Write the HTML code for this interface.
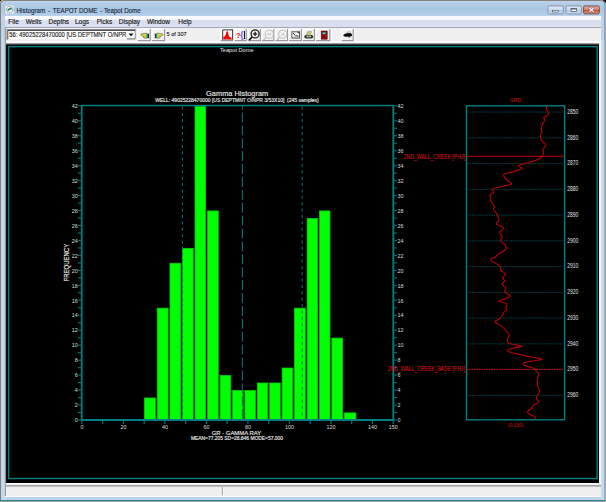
<!DOCTYPE html>
<html><head><meta charset="utf-8">
<style>
html,body{margin:0;padding:0;}
body{width:606px;height:502px;overflow:hidden;position:relative;background:#E2CAC2;font-family:"Liberation Sans", sans-serif;}
.abs{position:absolute;}
svg text{font-family:"Liberation Sans", sans-serif;}
.chart text{stroke-width:0.15px;}
.s5{font-size:5px;fill:#E8E8E8;}
</style></head><body>
<!-- window frame -->
<svg class="abs" style="left:0;top:0" width="606" height="502" viewBox="0 0 606 502">
<defs>
<linearGradient id="tb" x1="0" y1="0" x2="0" y2="1"><stop offset="0" stop-color="#BAD1EA"/><stop offset="0.5" stop-color="#A9C6E3"/><stop offset="1" stop-color="#B3CDE8"/></linearGradient>
<linearGradient id="bb" x1="0" y1="0" x2="0" y2="1"><stop offset="0" stop-color="#DDE8F4"/><stop offset="0.45" stop-color="#CBDBEE"/><stop offset="0.5" stop-color="#B3C9E3"/><stop offset="1" stop-color="#C9DCF0"/></linearGradient>
<linearGradient id="cb" x1="0" y1="0" x2="0" y2="1"><stop offset="0" stop-color="#EBAFA0"/><stop offset="0.45" stop-color="#DD8470"/><stop offset="0.52" stop-color="#C9472F"/><stop offset="1" stop-color="#E3A08E"/></linearGradient>
</defs>
<rect x="0" y="0" width="606" height="502" fill="#E2CAC2"/>
<path d="M0 501.3 V5 Q0 0 5 0 H600 Q605.3 0 605.3 5 V501.3 Z" fill="#858078"/>
<rect x="604.4" y="2" width="0.9" height="499.3" fill="#4A98A2"/>
<rect x="0" y="500" width="605.3" height="1.3" fill="#2C8088"/>
<path d="M1 500 V5 Q1 1 5 1 H600 Q604.4 1 604.4 5 V500 Z" fill="#BDD3EB"/>
<rect x="1.5" y="1.5" width="602.5" height="14.1" rx="3" fill="url(#tb)"/>
<rect x="1.8" y="40" width="3.2" height="460" fill="#C4DAF1"/>
<rect x="601" y="40" width="3.2" height="460" fill="#C4DAF1"/>
<rect x="0" y="0" width="1.2" height="1.2" fill="#111"/>
<path d="M603 0 H606 V2.5 H605 Q604.5 0.8 603 0.8 Z" fill="#111"/>
<!-- min -->
<rect x="547.9" y="5.9" width="15.4" height="8" rx="1.5" fill="url(#bb)" stroke="#7D8FA6" stroke-width="0.9"/>
<rect x="552.6" y="10.3" width="5.8" height="1.7" fill="#FFFFFF" stroke="#3F4F63" stroke-width="0.6"/>
<!-- max -->
<rect x="566" y="5.9" width="15.4" height="8" rx="1.5" fill="url(#bb)" stroke="#7D8FA6" stroke-width="0.9"/>
<rect x="571" y="8.6" width="5.4" height="2.8" fill="#FFFFFF" stroke="#3F4F63" stroke-width="0.7"/>
<rect x="571" y="8.6" width="5.4" height="0.9" fill="#3F4F63"/>
<!-- close -->
<rect x="583.6" y="5.9" width="15.7" height="8" rx="1.5" fill="url(#cb)" stroke="#6E4440" stroke-width="0.9"/>
<path d="M589.6 8 L593.4 11.6 M593.4 8 L589.6 11.6" stroke="#6A5A60" stroke-width="2.2" stroke-linecap="round"/>
<path d="M589.6 8 L593.4 11.6 M593.4 8 L589.6 11.6" stroke="#F4F8FC" stroke-width="1.2" stroke-linecap="round"/>
<!-- app icon -->
<rect x="5.3" y="5.5" width="8.6" height="8.4" rx="1.5" fill="#E9EEF0"/>
<circle cx="9.6" cy="9.7" r="3.3" fill="none" stroke="#6F8A80" stroke-width="1" stroke-dasharray="1.3 0.8"/>
<path d="M7.6 10.3 L9.3 9.2 L11.6 8.2" stroke="#157A5C" stroke-width="1.6" fill="none"/>
</svg>
<svg class="abs" style="left:0;top:0" width="200" height="16" viewBox="0 0 200 16"><g style="font-size:6.8px" fill="#1C2A3E" stroke="#1C2A3E" stroke-width="0.15">
<text x="16.6" y="12.5" textLength="28.6" lengthAdjust="spacingAndGlyphs">Histogram</text>
<text x="48" y="12.5">-</text>
<text x="52.7" y="12.5" textLength="44.7" lengthAdjust="spacingAndGlyphs">TEAPOT DOME</text>
<text x="100.1" y="12.5">-</text>
<text x="104" y="12.5" textLength="36.6" lengthAdjust="spacingAndGlyphs">Teapot Dome</text>
</g></svg>

<!-- menu bar -->
<div class="abs" style="left:5px;top:15.6px;width:596px;height:11.4px;background:linear-gradient(#FBFCFE 0%,#F6F8FC 30%,#DADFF0 40%,#DBE0F1 100%);"></div>
<div class="abs" style="left:5px;top:26.9px;width:596px;height:1.1px;background:#A4A8B0;"></div>
<div class="abs" style="left:0;top:17.8px;font-size:6.5px;line-height:8px;color:#1B1B1B;white-space:pre;-webkit-text-stroke:0.15px #1B1B1B;"><span class="abs" style="left:8.3px">File</span><span class="abs" style="left:25.7px">Wells</span><span class="abs" style="left:48.5px">Depths</span><span class="abs" style="left:75px">Logs</span><span class="abs" style="left:96.7px">Picks</span><span class="abs" style="left:118.8px">Display</span><span class="abs" style="left:146.9px">Window</span><span class="abs" style="left:178.2px">Help</span></div>

<!-- toolbar -->
<div class="abs" style="left:5px;top:28px;width:596px;height:13.3px;background:#F0F0F0;"></div>
<div class="abs" style="left:5px;top:41px;width:596px;height:1.8px;background:#FDFDFD;"></div>
<div class="abs" style="left:5px;top:42.8px;width:596px;height:2.3px;background:linear-gradient(#C8C8C8,#101010);"></div>

<!-- dropdown -->
<svg class="abs" style="left:0;top:26px" width="140" height="18" viewBox="0 26 140 18"><rect x="6.5" y="29" width="129.5" height="11" fill="#F0F0F0"/><path d="M7 40 V29.6 H136" stroke="#8A8A8A" stroke-width="1.1" fill="none"/><path d="M8 39.2 V30.6 H135.2" stroke="#404040" stroke-width="1" fill="none"/><rect x="8.5" y="31.1" width="126.3" height="7.6" fill="#FFFFFF"/><rect x="127" y="31.1" width="7.8" height="7.4" fill="#F6F6F6"/><path d="M126.9 38.9 H135.4 V30.6" stroke="#6A6A6A" stroke-width="1" fill="none"/><path d="M135.9 40 V29.6" stroke="#DADADA" stroke-width="0.8" fill="none"/></svg>
<svg class="abs" style="left:0;top:26px" width="200" height="18" viewBox="0 26 200 18"><text x="9.3" y="37.4" style="font-size:6.9px" fill="#141414" stroke="#141414" stroke-width="0.12" textLength="117" lengthAdjust="spacingAndGlyphs">56: 49025228470000 [US DEPTMNT O/NPR</text><text x="166.5" y="36.1" style="font-size:6.2px" fill="#141414" stroke="#141414" stroke-width="0.12" textLength="20.1" lengthAdjust="spacingAndGlyphs">5 of 307</text></svg>

<svg class="abs" style="left:127px;top:30px" width="9" height="9" viewBox="0 0 9 9"><path d="M1.9 3.8 L6.1 3.8 L4 6.1 Z" fill="#000" stroke="#000" stroke-width="0.3"/></svg>
<!-- nav buttons + toolbar icons -->
<svg class="abs" style="left:0;top:0" width="606" height="50" viewBox="0 0 606 50"><rect x="137.3" y="28.5" width="13.5" height="12.700000000000003" fill="#F2F2F2"/><path d="M137.8 41.2 V29.0 H150.8" stroke="#FFFFFF" stroke-width="1" fill="none"/><path d="M137.8 40.6 H150.20000000000002 V29.0" stroke="#9A9A9A" stroke-width="1.2" fill="none"/><rect x="151.6" y="28.5" width="13.5" height="12.700000000000003" fill="#F2F2F2"/><path d="M152.1 41.2 V29.0 H165.1" stroke="#FFFFFF" stroke-width="1" fill="none"/><path d="M152.1 40.6 H164.5 V29.0" stroke="#9A9A9A" stroke-width="1.2" fill="none"/><g transform="translate(140.7 0) scale(1 1)"><path d="M0.2 34.6 Q0.2 33.7 1.2 33.7 L3.4 33.7 L4.2 33.1 L5.6 33.3 L6.2 33.6 L6.2 38 L4.4 38.2 Q3.2 38.2 2.8 37.4 L2.6 36.2 L1.2 35.6 Q0.2 35.5 0.2 34.6 Z" fill="#E4E24A" stroke="#4A4A18" stroke-width="0.6" stroke-linejoin="round"/><path d="M3 35.8 L5 35.8 M3.2 36.9 L5 36.9" stroke="#8A8A30" stroke-width="0.4"/><rect x="6.1" y="33.6" width="1.2" height="4.6" fill="#0A9AA8"/><rect x="7.2" y="33.6" width="1" height="4.6" fill="#111"/></g><g transform="translate(163.0 0) scale(-1 1)"><path d="M0.2 34.6 Q0.2 33.7 1.2 33.7 L3.4 33.7 L4.2 33.1 L5.6 33.3 L6.2 33.6 L6.2 38 L4.4 38.2 Q3.2 38.2 2.8 37.4 L2.6 36.2 L1.2 35.6 Q0.2 35.5 0.2 34.6 Z" fill="#E4E24A" stroke="#4A4A18" stroke-width="0.6" stroke-linejoin="round"/><path d="M3 35.8 L5 35.8 M3.2 36.9 L5 36.9" stroke="#8A8A30" stroke-width="0.4"/><rect x="6.1" y="33.6" width="1.2" height="4.6" fill="#0A9AA8"/><rect x="7.2" y="33.6" width="1" height="4.6" fill="#111"/></g><rect x="220.2" y="28.5" width="12.800000000000011" height="12.700000000000003" fill="#F2F2F2"/><path d="M220.7 41.2 V29.0 H233.0" stroke="#FFFFFF" stroke-width="1" fill="none"/><path d="M220.7 40.6 H232.4 V29.0" stroke="#9A9A9A" stroke-width="1.2" fill="none"/><rect x="222.7" y="29.9" width="9.9" height="9.9" fill="#FAFAFA"/><path d="M222.7 39.8 V29.9 H232.6 V39.8" stroke="#3A3A3A" stroke-width="1" fill="none"/><path d="M222.7 39.6 H232.6" stroke="#8A8A8A" stroke-width="0.8" fill="none"/><path d="M223.3 39.2 L223.4 36.6 L224.6 36.4 L225.4 35.6 L226 33.6 L226.8 31.3 L227.8 31.3 L228.4 33.8 L228.8 36 L230 37 L231.2 37.8 L232 39.2 Z" fill="#FF0000"/><rect x="234.0" y="28.5" width="12.800000000000011" height="12.700000000000003" fill="#F2F2F2"/><path d="M234.5 41.2 V29.0 H246.8" stroke="#FFFFFF" stroke-width="1" fill="none"/><path d="M234.5 40.6 H246.20000000000002 V29.0" stroke="#9A9A9A" stroke-width="1.2" fill="none"/><text x="235.9" y="37.9" style="font:bold 7.6px 'Liberation Sans',sans-serif" fill="#FF0000">?</text><text x="240.3" y="38.3" style="font:bold 8.2px 'Liberation Sans',sans-serif" fill="#5A5AFF">{</text><rect x="243.9" y="31" width="1.1" height="6.8" fill="#1A1A1A"/><rect x="243.8" y="38" width="1.3" height="1" fill="#000"/><rect x="247.8" y="28.5" width="13.199999999999989" height="12.700000000000003" fill="#F2F2F2"/><path d="M248.3 41.2 V29.0 H261.0" stroke="#FFFFFF" stroke-width="1" fill="none"/><path d="M248.3 40.6 H260.4 V29.0" stroke="#9A9A9A" stroke-width="1.2" fill="none"/><circle cx="255.1" cy="33.9" r="4" fill="none" stroke="#1A1A1A" stroke-width="1.3"/><path d="M252.3 36.8 L249 40.1" stroke="#1A1A1A" stroke-width="1.7"/><path d="M253 33.9 H257.2 M255.1 31.8 V36" stroke="#1A1A1A" stroke-width="1.3"/><rect x="261.5" y="28.5" width="12.899999999999977" height="12.700000000000003" fill="#F2F2F2"/><path d="M262.0 41.2 V29.0 H274.4" stroke="#FFFFFF" stroke-width="1" fill="none"/><path d="M262.0 40.6 H273.79999999999995 V29.0" stroke="#9A9A9A" stroke-width="1.2" fill="none"/><circle cx="269.3" cy="34.2" r="4.1" fill="none" stroke="#BDBDBD" stroke-width="1"/><path d="M266.4 37.1 L263.5 40" stroke="#BDBDBD" stroke-width="1.2"/><path d="M267.4 34.2 H271.2" stroke="#BDBDBD" stroke-width="1.2"/><rect x="274.9" y="28.5" width="13.300000000000011" height="12.700000000000003" fill="#F2F2F2"/><path d="M275.4 41.2 V29.0 H288.2" stroke="#FFFFFF" stroke-width="1" fill="none"/><path d="M275.4 40.6 H287.59999999999997 V29.0" stroke="#9A9A9A" stroke-width="1.2" fill="none"/><circle cx="282.8" cy="34.2" r="4.1" fill="none" stroke="#BDBDBD" stroke-width="1"/><path d="M279.9 37.1 L277 40" stroke="#BDBDBD" stroke-width="1.2"/><path d="M281.3 32.7 L284.3 35.7 M284.3 32.7 L281.3 35.7" stroke="#BDBDBD" stroke-width="0.9"/><rect x="288.6" y="28.5" width="13.399999999999977" height="12.700000000000003" fill="#F2F2F2"/><path d="M289.1 41.2 V29.0 H302.0" stroke="#FFFFFF" stroke-width="1" fill="none"/><path d="M289.1 40.6 H301.4 V29.0" stroke="#9A9A9A" stroke-width="1.2" fill="none"/><rect x="291.9" y="31.8" width="7.6" height="6.3" fill="#FCFCFC" stroke="#555" stroke-width="1"/><path d="M293 33.6 Q294.2 33.4 294.6 35 Q295.4 36.6 297 35.6 L298.6 36.2" stroke="#222" stroke-width="0.9" fill="none"/><path d="M293.2 37.2 Q295.5 36.4 298.6 37.3" stroke="#777" stroke-width="0.6" fill="none"/><circle cx="298.3" cy="32.6" r="0.8" fill="#333"/><rect x="302.3" y="28.5" width="12.699999999999989" height="12.700000000000003" fill="#F2F2F2"/><path d="M302.8 41.2 V29.0 H315.0" stroke="#FFFFFF" stroke-width="1" fill="none"/><path d="M302.8 40.6 H314.4 V29.0" stroke="#9A9A9A" stroke-width="1.2" fill="none"/><path d="M306.2 34.8 L307.6 31.6 L311.6 31.4 L310.6 34.8 Z" fill="#D8D8A0" stroke="#8A8A50" stroke-width="0.5"/><path d="M307.2 33 L310.6 32.6 M307 34 L310.2 33.6" stroke="#9A9A40" stroke-width="0.4"/><rect x="304.3" y="34.9" width="8.9" height="3.5" rx="1.6" fill="#2E2E2E"/><rect x="306.6" y="35.6" width="4.4" height="1.6" fill="#D8D8D8"/><rect x="308.2" y="35.6" width="1.3" height="0.9" fill="#E03020"/><rect x="308.2" y="36.4" width="1.3" height="0.9" fill="#20A020"/><rect x="315.7" y="28.5" width="14.699999999999989" height="12.700000000000003" fill="#F2F2F2"/><path d="M316.2 41.2 V29.0 H330.4" stroke="#FFFFFF" stroke-width="1" fill="none"/><path d="M316.2 40.6 H329.79999999999995 V29.0" stroke="#9A9A9A" stroke-width="1.2" fill="none"/><rect x="321.2" y="31.0" width="6" height="8.2" fill="#8A0A0A" stroke="#4A0000" stroke-width="0.5"/><rect x="322.6" y="32.4" width="3" height="1.8" fill="#30E0F0"/><rect x="326" y="35.4" width="0.7" height="0.7" fill="#E08020"/><path d="M331.4 28.5 V41.2" stroke="#FFFFFF" stroke-width="0.8"/><rect x="341.2" y="28.5" width="12.600000000000023" height="12.700000000000003" fill="#F2F2F2"/><path d="M341.7 41.2 V29.0 H353.8" stroke="#FFFFFF" stroke-width="1" fill="none"/><path d="M341.7 40.6 H353.2 V29.0" stroke="#9A9A9A" stroke-width="1.2" fill="none"/><path d="M346.6 32.4 Q349.4 31.3 351.2 32.4" stroke="#9A9A9A" stroke-width="0.8" fill="none"/><path d="M343.1 35.5 Q344 33.8 346.8 33.3 Q350.4 32.4 352 34.3 Q352.5 35.9 351 36.6 L349.8 36.5 L349.3 37.7 L348.3 37.3 L348.6 36.4 Q346.6 36.5 345.4 36.7 Q344 36.5 343.1 35.5 Z" fill="#0E0E0E"/><path d="M354.6 28.5 V41.2" stroke="#FFFFFF" stroke-width="0.8"/></svg>


<!-- client area -->
<svg class="abs" style="left:0;top:0" width="606" height="502" viewBox="0 0 606 502">
<defs><linearGradient id="lg" x1="0" y1="0" x2="1" y2="0"><stop offset="0" stop-color="#A6A6A6"/><stop offset="1" stop-color="#3A3A3A"/></linearGradient></defs>
<rect x="5" y="483" width="596" height="1.8" fill="#FAFAFA"/>
<rect x="5" y="484.9" width="596" height="1.9" fill="#A9A9A9"/>
<rect x="5" y="486.8" width="596" height="9.1" fill="#EFEFEF"/>
<rect x="5" y="495.8" width="596" height="1.2" fill="#FBFBFB"/>
<rect x="221.9" y="487" width="1.2" height="8.3" fill="#A8A8A8"/><rect x="223.1" y="487" width="0.8" height="8.3" fill="#FFFFFF"/>
<rect x="4.8" y="27" width="1.2" height="469" fill="#9E9E9E"/>
<rect x="5.9" y="45" width="593.2" height="438" fill="#000"/>
<rect x="5.3" y="45" width="1" height="438" fill="url(#lg)"/>
<rect x="599.1" y="42" width="1.9" height="441" fill="#F8F8F8"/>
<rect x="8.6" y="46.6" width="588.6" height="431.9" fill="none" stroke="#008080" stroke-width="1.4"/>
</svg>
<svg class="abs" style="left:200px;top:40px" width="80" height="16" viewBox="200 40 80 16"><text x="220" y="52.4" style="font-size:6.2px" fill="#E8E8E8" textLength="33.6" lengthAdjust="spacingAndGlyphs">Teapot Dome</text></svg>

<svg class="abs chart" style="left:0;top:0;color:#E8E8E8" width="606" height="502" viewBox="0 0 606 502">
<rect x="144.50" y="397.96" width="10.85" height="22.04" fill="#00FF00" stroke="#00D200" stroke-width="0.8"/>
<rect x="157.25" y="308.19" width="10.80" height="111.81" fill="#00FF00" stroke="#00D200" stroke-width="0.8"/>
<rect x="169.95" y="263.30" width="10.70" height="156.70" fill="#00FF00" stroke="#00D200" stroke-width="0.8"/>
<rect x="182.55" y="248.34" width="10.60" height="171.66" fill="#00FF00" stroke="#00D200" stroke-width="0.8"/>
<rect x="195.05" y="106.20" width="10.60" height="313.80" fill="#00FF00" stroke="#00D200" stroke-width="0.8"/>
<rect x="207.55" y="210.93" width="10.70" height="209.07" fill="#00FF00" stroke="#00D200" stroke-width="0.8"/>
<rect x="220.15" y="375.51" width="10.60" height="44.49" fill="#00FF00" stroke="#00D200" stroke-width="0.8"/>
<rect x="232.65" y="390.48" width="10.40" height="29.52" fill="#00FF00" stroke="#00D200" stroke-width="0.8"/>
<rect x="244.95" y="390.48" width="10.50" height="29.52" fill="#00FF00" stroke="#00D200" stroke-width="0.8"/>
<rect x="257.35" y="383.00" width="10.40" height="37.00" fill="#00FF00" stroke="#00D200" stroke-width="0.8"/>
<rect x="269.65" y="383.00" width="10.60" height="37.00" fill="#00FF00" stroke="#00D200" stroke-width="0.8"/>
<rect x="282.15" y="368.03" width="10.50" height="51.97" fill="#00FF00" stroke="#00D200" stroke-width="0.8"/>
<rect x="294.55" y="308.19" width="10.70" height="111.81" fill="#00FF00" stroke="#00D200" stroke-width="0.8"/>
<rect x="307.15" y="218.41" width="10.50" height="201.59" fill="#00FF00" stroke="#00D200" stroke-width="0.8"/>
<rect x="319.55" y="210.93" width="10.40" height="209.07" fill="#00FF00" stroke="#00D200" stroke-width="0.8"/>
<rect x="331.85" y="338.11" width="10.70" height="81.89" fill="#00FF00" stroke="#00D200" stroke-width="0.8"/>
<rect x="344.45" y="412.92" width="11.45" height="7.08" fill="#00FF00" stroke="#00D200" stroke-width="0.8"/>
<line x1="182.40" y1="105.80" x2="182.40" y2="420.00" stroke="#007878" stroke-width="1.05" stroke-dasharray="3 3.37" stroke-dashoffset="-0.83"/>
<line x1="242.40" y1="105.80" x2="242.40" y2="420.00" stroke="#007878" stroke-width="1.05" stroke-dasharray="10 2.9" stroke-dashoffset="6.3"/>
<line x1="302.20" y1="105.80" x2="302.20" y2="420.00" stroke="#007878" stroke-width="1.05" stroke-dasharray="3 3.37" stroke-dashoffset="-0.83"/>
<line x1="81.70" y1="105.45" x2="393.30" y2="105.45" stroke="#008080" stroke-width="1.5"/>
<line x1="81.70" y1="105.10" x2="81.70" y2="420.90" stroke="#008080" stroke-width="1.8"/>
<line x1="393.30" y1="105.10" x2="393.30" y2="420.90" stroke="#008080" stroke-width="1.8"/>
<line x1="80.80" y1="420.00" x2="394.20" y2="420.00" stroke="#008080" stroke-width="1.9"/>
<line x1="77.9" y1="420.00" x2="81.70" y2="420.00" stroke="#007474" stroke-width="1.1"/>
<line x1="393.30" y1="420.00" x2="397" y2="420.00" stroke="#007474" stroke-width="1.1"/>
<text transform="translate(77.80 422.20) scale(0.9 1)" text-anchor="end" style="font-size:6.0px" fill="#DDDDDD" >0</text>
<text transform="translate(397.60 422.20) scale(0.9 1)" text-anchor="start" style="font-size:6.0px" fill="#DDDDDD" >0</text>
<line x1="77.9" y1="412.52" x2="81.70" y2="412.52" stroke="#007474" stroke-width="1.1"/>
<line x1="393.30" y1="412.52" x2="397" y2="412.52" stroke="#007474" stroke-width="1.1"/>
<line x1="77.9" y1="405.04" x2="81.70" y2="405.04" stroke="#007474" stroke-width="1.1"/>
<line x1="393.30" y1="405.04" x2="397" y2="405.04" stroke="#007474" stroke-width="1.1"/>
<text transform="translate(77.80 407.24) scale(0.9 1)" text-anchor="end" style="font-size:6.0px" fill="#DDDDDD" >2</text>
<text transform="translate(397.60 407.24) scale(0.9 1)" text-anchor="start" style="font-size:6.0px" fill="#DDDDDD" >2</text>
<line x1="77.9" y1="397.56" x2="81.70" y2="397.56" stroke="#007474" stroke-width="1.1"/>
<line x1="393.30" y1="397.56" x2="397" y2="397.56" stroke="#007474" stroke-width="1.1"/>
<line x1="77.9" y1="390.08" x2="81.70" y2="390.08" stroke="#007474" stroke-width="1.1"/>
<line x1="393.30" y1="390.08" x2="397" y2="390.08" stroke="#007474" stroke-width="1.1"/>
<text transform="translate(77.80 392.28) scale(0.9 1)" text-anchor="end" style="font-size:6.0px" fill="#DDDDDD" >4</text>
<text transform="translate(397.60 392.28) scale(0.9 1)" text-anchor="start" style="font-size:6.0px" fill="#DDDDDD" >4</text>
<line x1="77.9" y1="382.60" x2="81.70" y2="382.60" stroke="#007474" stroke-width="1.1"/>
<line x1="393.30" y1="382.60" x2="397" y2="382.60" stroke="#007474" stroke-width="1.1"/>
<line x1="77.9" y1="375.11" x2="81.70" y2="375.11" stroke="#007474" stroke-width="1.1"/>
<line x1="393.30" y1="375.11" x2="397" y2="375.11" stroke="#007474" stroke-width="1.1"/>
<text transform="translate(77.80 377.31) scale(0.9 1)" text-anchor="end" style="font-size:6.0px" fill="#DDDDDD" >6</text>
<text transform="translate(397.60 377.31) scale(0.9 1)" text-anchor="start" style="font-size:6.0px" fill="#DDDDDD" >6</text>
<line x1="77.9" y1="367.63" x2="81.70" y2="367.63" stroke="#007474" stroke-width="1.1"/>
<line x1="393.30" y1="367.63" x2="397" y2="367.63" stroke="#007474" stroke-width="1.1"/>
<line x1="77.9" y1="360.15" x2="81.70" y2="360.15" stroke="#007474" stroke-width="1.1"/>
<line x1="393.30" y1="360.15" x2="397" y2="360.15" stroke="#007474" stroke-width="1.1"/>
<text transform="translate(77.80 362.35) scale(0.9 1)" text-anchor="end" style="font-size:6.0px" fill="#DDDDDD" >8</text>
<text transform="translate(397.60 362.35) scale(0.9 1)" text-anchor="start" style="font-size:6.0px" fill="#DDDDDD" >8</text>
<line x1="77.9" y1="352.67" x2="81.70" y2="352.67" stroke="#007474" stroke-width="1.1"/>
<line x1="393.30" y1="352.67" x2="397" y2="352.67" stroke="#007474" stroke-width="1.1"/>
<line x1="77.9" y1="345.19" x2="81.70" y2="345.19" stroke="#007474" stroke-width="1.1"/>
<line x1="393.30" y1="345.19" x2="397" y2="345.19" stroke="#007474" stroke-width="1.1"/>
<text transform="translate(77.80 347.39) scale(0.9 1)" text-anchor="end" style="font-size:6.0px" fill="#DDDDDD" >10</text>
<text transform="translate(397.60 347.39) scale(0.9 1)" text-anchor="start" style="font-size:6.0px" fill="#DDDDDD" >10</text>
<line x1="77.9" y1="337.71" x2="81.70" y2="337.71" stroke="#007474" stroke-width="1.1"/>
<line x1="393.30" y1="337.71" x2="397" y2="337.71" stroke="#007474" stroke-width="1.1"/>
<line x1="77.9" y1="330.23" x2="81.70" y2="330.23" stroke="#007474" stroke-width="1.1"/>
<line x1="393.30" y1="330.23" x2="397" y2="330.23" stroke="#007474" stroke-width="1.1"/>
<text transform="translate(77.80 332.43) scale(0.9 1)" text-anchor="end" style="font-size:6.0px" fill="#DDDDDD" >12</text>
<text transform="translate(397.60 332.43) scale(0.9 1)" text-anchor="start" style="font-size:6.0px" fill="#DDDDDD" >12</text>
<line x1="77.9" y1="322.75" x2="81.70" y2="322.75" stroke="#007474" stroke-width="1.1"/>
<line x1="393.30" y1="322.75" x2="397" y2="322.75" stroke="#007474" stroke-width="1.1"/>
<line x1="77.9" y1="315.27" x2="81.70" y2="315.27" stroke="#007474" stroke-width="1.1"/>
<line x1="393.30" y1="315.27" x2="397" y2="315.27" stroke="#007474" stroke-width="1.1"/>
<text transform="translate(77.80 317.47) scale(0.9 1)" text-anchor="end" style="font-size:6.0px" fill="#DDDDDD" >14</text>
<text transform="translate(397.60 317.47) scale(0.9 1)" text-anchor="start" style="font-size:6.0px" fill="#DDDDDD" >14</text>
<line x1="77.9" y1="307.79" x2="81.70" y2="307.79" stroke="#007474" stroke-width="1.1"/>
<line x1="393.30" y1="307.79" x2="397" y2="307.79" stroke="#007474" stroke-width="1.1"/>
<line x1="77.9" y1="300.30" x2="81.70" y2="300.30" stroke="#007474" stroke-width="1.1"/>
<line x1="393.30" y1="300.30" x2="397" y2="300.30" stroke="#007474" stroke-width="1.1"/>
<text transform="translate(77.80 302.50) scale(0.9 1)" text-anchor="end" style="font-size:6.0px" fill="#DDDDDD" >16</text>
<text transform="translate(397.60 302.50) scale(0.9 1)" text-anchor="start" style="font-size:6.0px" fill="#DDDDDD" >16</text>
<line x1="77.9" y1="292.82" x2="81.70" y2="292.82" stroke="#007474" stroke-width="1.1"/>
<line x1="393.30" y1="292.82" x2="397" y2="292.82" stroke="#007474" stroke-width="1.1"/>
<line x1="77.9" y1="285.34" x2="81.70" y2="285.34" stroke="#007474" stroke-width="1.1"/>
<line x1="393.30" y1="285.34" x2="397" y2="285.34" stroke="#007474" stroke-width="1.1"/>
<text transform="translate(77.80 287.54) scale(0.9 1)" text-anchor="end" style="font-size:6.0px" fill="#DDDDDD" >18</text>
<text transform="translate(397.60 287.54) scale(0.9 1)" text-anchor="start" style="font-size:6.0px" fill="#DDDDDD" >18</text>
<line x1="77.9" y1="277.86" x2="81.70" y2="277.86" stroke="#007474" stroke-width="1.1"/>
<line x1="393.30" y1="277.86" x2="397" y2="277.86" stroke="#007474" stroke-width="1.1"/>
<line x1="77.9" y1="270.38" x2="81.70" y2="270.38" stroke="#007474" stroke-width="1.1"/>
<line x1="393.30" y1="270.38" x2="397" y2="270.38" stroke="#007474" stroke-width="1.1"/>
<text transform="translate(77.80 272.58) scale(0.9 1)" text-anchor="end" style="font-size:6.0px" fill="#DDDDDD" >20</text>
<text transform="translate(397.60 272.58) scale(0.9 1)" text-anchor="start" style="font-size:6.0px" fill="#DDDDDD" >20</text>
<line x1="77.9" y1="262.90" x2="81.70" y2="262.90" stroke="#007474" stroke-width="1.1"/>
<line x1="393.30" y1="262.90" x2="397" y2="262.90" stroke="#007474" stroke-width="1.1"/>
<line x1="77.9" y1="255.42" x2="81.70" y2="255.42" stroke="#007474" stroke-width="1.1"/>
<line x1="393.30" y1="255.42" x2="397" y2="255.42" stroke="#007474" stroke-width="1.1"/>
<text transform="translate(77.80 257.62) scale(0.9 1)" text-anchor="end" style="font-size:6.0px" fill="#DDDDDD" >22</text>
<text transform="translate(397.60 257.62) scale(0.9 1)" text-anchor="start" style="font-size:6.0px" fill="#DDDDDD" >22</text>
<line x1="77.9" y1="247.94" x2="81.70" y2="247.94" stroke="#007474" stroke-width="1.1"/>
<line x1="393.30" y1="247.94" x2="397" y2="247.94" stroke="#007474" stroke-width="1.1"/>
<line x1="77.9" y1="240.46" x2="81.70" y2="240.46" stroke="#007474" stroke-width="1.1"/>
<line x1="393.30" y1="240.46" x2="397" y2="240.46" stroke="#007474" stroke-width="1.1"/>
<text transform="translate(77.80 242.66) scale(0.9 1)" text-anchor="end" style="font-size:6.0px" fill="#DDDDDD" >24</text>
<text transform="translate(397.60 242.66) scale(0.9 1)" text-anchor="start" style="font-size:6.0px" fill="#DDDDDD" >24</text>
<line x1="77.9" y1="232.98" x2="81.70" y2="232.98" stroke="#007474" stroke-width="1.1"/>
<line x1="393.30" y1="232.98" x2="397" y2="232.98" stroke="#007474" stroke-width="1.1"/>
<line x1="77.9" y1="225.50" x2="81.70" y2="225.50" stroke="#007474" stroke-width="1.1"/>
<line x1="393.30" y1="225.50" x2="397" y2="225.50" stroke="#007474" stroke-width="1.1"/>
<text transform="translate(77.80 227.70) scale(0.9 1)" text-anchor="end" style="font-size:6.0px" fill="#DDDDDD" >26</text>
<text transform="translate(397.60 227.70) scale(0.9 1)" text-anchor="start" style="font-size:6.0px" fill="#DDDDDD" >26</text>
<line x1="77.9" y1="218.01" x2="81.70" y2="218.01" stroke="#007474" stroke-width="1.1"/>
<line x1="393.30" y1="218.01" x2="397" y2="218.01" stroke="#007474" stroke-width="1.1"/>
<line x1="77.9" y1="210.53" x2="81.70" y2="210.53" stroke="#007474" stroke-width="1.1"/>
<line x1="393.30" y1="210.53" x2="397" y2="210.53" stroke="#007474" stroke-width="1.1"/>
<text transform="translate(77.80 212.73) scale(0.9 1)" text-anchor="end" style="font-size:6.0px" fill="#DDDDDD" >28</text>
<text transform="translate(397.60 212.73) scale(0.9 1)" text-anchor="start" style="font-size:6.0px" fill="#DDDDDD" >28</text>
<line x1="77.9" y1="203.05" x2="81.70" y2="203.05" stroke="#007474" stroke-width="1.1"/>
<line x1="393.30" y1="203.05" x2="397" y2="203.05" stroke="#007474" stroke-width="1.1"/>
<line x1="77.9" y1="195.57" x2="81.70" y2="195.57" stroke="#007474" stroke-width="1.1"/>
<line x1="393.30" y1="195.57" x2="397" y2="195.57" stroke="#007474" stroke-width="1.1"/>
<text transform="translate(77.80 197.77) scale(0.9 1)" text-anchor="end" style="font-size:6.0px" fill="#DDDDDD" >30</text>
<text transform="translate(397.60 197.77) scale(0.9 1)" text-anchor="start" style="font-size:6.0px" fill="#DDDDDD" >30</text>
<line x1="77.9" y1="188.09" x2="81.70" y2="188.09" stroke="#007474" stroke-width="1.1"/>
<line x1="393.30" y1="188.09" x2="397" y2="188.09" stroke="#007474" stroke-width="1.1"/>
<line x1="77.9" y1="180.61" x2="81.70" y2="180.61" stroke="#007474" stroke-width="1.1"/>
<line x1="393.30" y1="180.61" x2="397" y2="180.61" stroke="#007474" stroke-width="1.1"/>
<text transform="translate(77.80 182.81) scale(0.9 1)" text-anchor="end" style="font-size:6.0px" fill="#DDDDDD" >32</text>
<text transform="translate(397.60 182.81) scale(0.9 1)" text-anchor="start" style="font-size:6.0px" fill="#DDDDDD" >32</text>
<line x1="77.9" y1="173.13" x2="81.70" y2="173.13" stroke="#007474" stroke-width="1.1"/>
<line x1="393.30" y1="173.13" x2="397" y2="173.13" stroke="#007474" stroke-width="1.1"/>
<line x1="77.9" y1="165.65" x2="81.70" y2="165.65" stroke="#007474" stroke-width="1.1"/>
<line x1="393.30" y1="165.65" x2="397" y2="165.65" stroke="#007474" stroke-width="1.1"/>
<text transform="translate(77.80 167.85) scale(0.9 1)" text-anchor="end" style="font-size:6.0px" fill="#DDDDDD" >34</text>
<text transform="translate(397.60 167.85) scale(0.9 1)" text-anchor="start" style="font-size:6.0px" fill="#DDDDDD" >34</text>
<line x1="77.9" y1="158.17" x2="81.70" y2="158.17" stroke="#007474" stroke-width="1.1"/>
<line x1="393.30" y1="158.17" x2="397" y2="158.17" stroke="#007474" stroke-width="1.1"/>
<line x1="77.9" y1="150.69" x2="81.70" y2="150.69" stroke="#007474" stroke-width="1.1"/>
<line x1="393.30" y1="150.69" x2="397" y2="150.69" stroke="#007474" stroke-width="1.1"/>
<text transform="translate(77.80 152.89) scale(0.9 1)" text-anchor="end" style="font-size:6.0px" fill="#DDDDDD" >36</text>
<text transform="translate(397.60 152.89) scale(0.9 1)" text-anchor="start" style="font-size:6.0px" fill="#DDDDDD" >36</text>
<line x1="77.9" y1="143.20" x2="81.70" y2="143.20" stroke="#007474" stroke-width="1.1"/>
<line x1="393.30" y1="143.20" x2="397" y2="143.20" stroke="#007474" stroke-width="1.1"/>
<line x1="77.9" y1="135.72" x2="81.70" y2="135.72" stroke="#007474" stroke-width="1.1"/>
<line x1="393.30" y1="135.72" x2="397" y2="135.72" stroke="#007474" stroke-width="1.1"/>
<text transform="translate(77.80 137.92) scale(0.9 1)" text-anchor="end" style="font-size:6.0px" fill="#DDDDDD" >38</text>
<text transform="translate(397.60 137.92) scale(0.9 1)" text-anchor="start" style="font-size:6.0px" fill="#DDDDDD" >38</text>
<line x1="77.9" y1="128.24" x2="81.70" y2="128.24" stroke="#007474" stroke-width="1.1"/>
<line x1="393.30" y1="128.24" x2="397" y2="128.24" stroke="#007474" stroke-width="1.1"/>
<line x1="77.9" y1="120.76" x2="81.70" y2="120.76" stroke="#007474" stroke-width="1.1"/>
<line x1="393.30" y1="120.76" x2="397" y2="120.76" stroke="#007474" stroke-width="1.1"/>
<text transform="translate(77.80 122.96) scale(0.9 1)" text-anchor="end" style="font-size:6.0px" fill="#DDDDDD" >40</text>
<text transform="translate(397.60 122.96) scale(0.9 1)" text-anchor="start" style="font-size:6.0px" fill="#DDDDDD" >40</text>
<line x1="77.9" y1="113.28" x2="81.70" y2="113.28" stroke="#007474" stroke-width="1.1"/>
<line x1="393.30" y1="113.28" x2="397" y2="113.28" stroke="#007474" stroke-width="1.1"/>
<line x1="77.9" y1="105.80" x2="81.70" y2="105.80" stroke="#007474" stroke-width="1.1"/>
<line x1="393.30" y1="105.80" x2="397" y2="105.80" stroke="#007474" stroke-width="1.1"/>
<text transform="translate(77.80 108.00) scale(0.9 1)" text-anchor="end" style="font-size:6.0px" fill="#DDDDDD" >42</text>
<text transform="translate(397.60 108.00) scale(0.9 1)" text-anchor="start" style="font-size:6.0px" fill="#DDDDDD" >42</text>
<line x1="81.90" y1="420.00" x2="81.90" y2="424" stroke="#008080" stroke-width="1.1"/>
<line x1="102.65" y1="420.00" x2="102.65" y2="424" stroke="#008080" stroke-width="1.1"/>
<line x1="123.41" y1="420.00" x2="123.41" y2="424" stroke="#008080" stroke-width="1.1"/>
<line x1="144.16" y1="420.00" x2="144.16" y2="424" stroke="#008080" stroke-width="1.1"/>
<line x1="164.92" y1="420.00" x2="164.92" y2="424" stroke="#008080" stroke-width="1.1"/>
<line x1="185.67" y1="420.00" x2="185.67" y2="424" stroke="#008080" stroke-width="1.1"/>
<line x1="206.42" y1="420.00" x2="206.42" y2="424" stroke="#008080" stroke-width="1.1"/>
<line x1="227.18" y1="420.00" x2="227.18" y2="424" stroke="#008080" stroke-width="1.1"/>
<line x1="247.93" y1="420.00" x2="247.93" y2="424" stroke="#008080" stroke-width="1.1"/>
<line x1="268.69" y1="420.00" x2="268.69" y2="424" stroke="#008080" stroke-width="1.1"/>
<line x1="289.44" y1="420.00" x2="289.44" y2="424" stroke="#008080" stroke-width="1.1"/>
<line x1="310.19" y1="420.00" x2="310.19" y2="424" stroke="#008080" stroke-width="1.1"/>
<line x1="330.95" y1="420.00" x2="330.95" y2="424" stroke="#008080" stroke-width="1.1"/>
<line x1="351.70" y1="420.00" x2="351.70" y2="424" stroke="#008080" stroke-width="1.1"/>
<line x1="372.46" y1="420.00" x2="372.46" y2="424" stroke="#008080" stroke-width="1.1"/>
<line x1="393.21" y1="420.00" x2="393.21" y2="424" stroke="#008080" stroke-width="1.1"/>
<text transform="translate(81.90 429.40) scale(0.9 1)" text-anchor="middle" style="font-size:6.0px" fill="#DDDDDD" >0</text>
<text transform="translate(123.41 429.40) scale(0.9 1)" text-anchor="middle" style="font-size:6.0px" fill="#DDDDDD" >20</text>
<text transform="translate(164.92 429.40) scale(0.9 1)" text-anchor="middle" style="font-size:6.0px" fill="#DDDDDD" >40</text>
<text transform="translate(206.42 429.40) scale(0.9 1)" text-anchor="middle" style="font-size:6.0px" fill="#DDDDDD" >60</text>
<text transform="translate(247.93 429.40) scale(0.9 1)" text-anchor="middle" style="font-size:6.0px" fill="#DDDDDD" >80</text>
<text transform="translate(289.44 429.40) scale(0.9 1)" text-anchor="middle" style="font-size:6.0px" fill="#DDDDDD" >100</text>
<text transform="translate(330.95 429.40) scale(0.9 1)" text-anchor="middle" style="font-size:6.0px" fill="#DDDDDD" >120</text>
<text transform="translate(372.46 429.40) scale(0.9 1)" text-anchor="middle" style="font-size:6.0px" fill="#DDDDDD" >140</text>
<text transform="translate(393.21 429.40) scale(0.9 1)" text-anchor="middle" style="font-size:6.0px" fill="#DDDDDD" >150</text>
<text x="206.1" y="95.5" style="font-size:7.6px" fill="#E8E8E8" stroke="#E8E8E8" textLength="62.1" lengthAdjust="spacingAndGlyphs">Gamma Histogram</text>
<text x="237" y="101.9" text-anchor="middle" style="font-size:5px" fill="#E8E8E8" stroke="#E8E8E8" xml:space="preserve">WELL: 49025228470000 [US DEPTMNT O/NPR 3/53X10]  (245 samples)</text>
<text x="211.7" y="434.9" style="font-size:6.1px" fill="#E8E8E8" stroke="#E8E8E8" textLength="49.5" lengthAdjust="spacingAndGlyphs">GR - GAMMA RAY</text>
<text x="190.9" y="439.9" style="font-size:5px" fill="#E8E8E8" stroke="#E8E8E8" textLength="92.1" lengthAdjust="spacingAndGlyphs">MEAN=77.205 SD=28.846 MODE=57.000</text>
<text transform="translate(69.1 281.5) rotate(-90)" style="font-size:6.7px" fill="#E8E8E8" stroke="#E8E8E8" textLength="37.7" lengthAdjust="spacingAndGlyphs">FREQUENCY</text>
<line x1="468.50" y1="112.10" x2="562.60" y2="112.10" stroke="#005252" stroke-width="1" stroke-dasharray="0.9 0.8"/>
<text x="567.2" y="113.80" style="font-size:6.3px" fill="#E6E6E6" textLength="11.0" lengthAdjust="spacingAndGlyphs">2850</text>
<line x1="468.50" y1="137.85" x2="562.60" y2="137.85" stroke="#005252" stroke-width="1" stroke-dasharray="0.9 0.8"/>
<text x="567.2" y="139.55" style="font-size:6.3px" fill="#E6E6E6" textLength="11.0" lengthAdjust="spacingAndGlyphs">2860</text>
<line x1="468.50" y1="163.60" x2="562.60" y2="163.60" stroke="#005252" stroke-width="1" stroke-dasharray="0.9 0.8"/>
<text x="567.2" y="165.30" style="font-size:6.3px" fill="#E6E6E6" textLength="11.0" lengthAdjust="spacingAndGlyphs">2870</text>
<line x1="468.50" y1="189.35" x2="562.60" y2="189.35" stroke="#005252" stroke-width="1" stroke-dasharray="0.9 0.8"/>
<text x="567.2" y="191.05" style="font-size:6.3px" fill="#E6E6E6" textLength="11.0" lengthAdjust="spacingAndGlyphs">2880</text>
<line x1="468.50" y1="215.10" x2="562.60" y2="215.10" stroke="#005252" stroke-width="1" stroke-dasharray="0.9 0.8"/>
<text x="567.2" y="216.80" style="font-size:6.3px" fill="#E6E6E6" textLength="11.0" lengthAdjust="spacingAndGlyphs">2890</text>
<line x1="468.50" y1="240.85" x2="562.60" y2="240.85" stroke="#005252" stroke-width="1" stroke-dasharray="0.9 0.8"/>
<text x="567.2" y="242.55" style="font-size:6.3px" fill="#E6E6E6" textLength="11.0" lengthAdjust="spacingAndGlyphs">2900</text>
<line x1="468.50" y1="266.60" x2="562.60" y2="266.60" stroke="#005252" stroke-width="1" stroke-dasharray="0.9 0.8"/>
<text x="567.2" y="268.30" style="font-size:6.3px" fill="#E6E6E6" textLength="11.0" lengthAdjust="spacingAndGlyphs">2910</text>
<line x1="468.50" y1="292.35" x2="562.60" y2="292.35" stroke="#005252" stroke-width="1" stroke-dasharray="0.9 0.8"/>
<text x="567.2" y="294.05" style="font-size:6.3px" fill="#E6E6E6" textLength="11.0" lengthAdjust="spacingAndGlyphs">2920</text>
<line x1="468.50" y1="318.10" x2="562.60" y2="318.10" stroke="#005252" stroke-width="1" stroke-dasharray="0.9 0.8"/>
<text x="567.2" y="319.80" style="font-size:6.3px" fill="#E6E6E6" textLength="11.0" lengthAdjust="spacingAndGlyphs">2930</text>
<line x1="468.50" y1="343.85" x2="562.60" y2="343.85" stroke="#005252" stroke-width="1" stroke-dasharray="0.9 0.8"/>
<text x="567.2" y="345.55" style="font-size:6.3px" fill="#E6E6E6" textLength="11.0" lengthAdjust="spacingAndGlyphs">2940</text>
<line x1="468.50" y1="369.60" x2="562.60" y2="369.60" stroke="#005252" stroke-width="1" stroke-dasharray="0.9 0.8"/>
<text x="567.2" y="371.30" style="font-size:6.3px" fill="#E6E6E6" textLength="11.0" lengthAdjust="spacingAndGlyphs">2950</text>
<line x1="468.50" y1="395.35" x2="562.60" y2="395.35" stroke="#005252" stroke-width="1" stroke-dasharray="0.9 0.8"/>
<text x="567.2" y="397.05" style="font-size:6.3px" fill="#E6E6E6" textLength="11.0" lengthAdjust="spacingAndGlyphs">2960</text>
<line x1="465.90" y1="156.2" x2="564.60" y2="156.2" stroke="#C80000" stroke-width="1.1"/>
<text x="403.6" y="158.50" style="font-size:6.6px" fill="#E81010" textLength="61.3" lengthAdjust="spacingAndGlyphs">2ND_WALL_CREEK [PHJ]</text>
<line x1="466.50" y1="369.3" x2="564.60" y2="369.3" stroke="#D00000" stroke-width="1.2" stroke-dasharray="1.5 1"/>
<text x="387.8" y="370.90" style="font-size:6.6px" fill="#E81010" textLength="77" lengthAdjust="spacingAndGlyphs">2ND_WALL_CREEK_BASE [PHJ]</text>
<path d="M546.70 106.00 C546.65 106.55 546.08 108.13 546.40 109.30 C546.72 110.47 548.55 111.90 548.60 113.00 C548.65 114.10 547.53 115.08 546.70 115.90 C545.87 116.72 543.93 117.13 543.60 117.90 C543.27 118.67 544.97 119.30 544.70 120.50 C544.43 121.70 542.55 123.67 542.00 125.10 C541.45 126.53 541.40 127.88 541.40 129.10 C541.40 130.32 542.15 131.30 542.00 132.40 C541.85 133.50 540.67 134.60 540.50 135.70 C540.33 136.80 540.57 137.90 541.00 139.00 C541.43 140.10 542.33 141.20 543.10 142.30 C543.87 143.40 545.60 144.50 545.60 145.60 C545.60 146.70 543.43 147.70 543.10 148.90 C542.77 150.10 543.78 151.52 543.60 152.80 C543.42 154.08 542.92 155.53 542.00 156.60 C541.08 157.67 540.07 158.32 538.10 159.20 C536.13 160.08 532.62 161.12 530.20 161.90 C527.78 162.68 525.58 163.25 523.60 163.90 C521.62 164.55 518.57 165.03 518.30 165.80 C518.03 166.57 522.45 167.62 522.00 168.50 C521.55 169.38 518.42 170.22 515.60 171.10 C512.78 171.98 507.07 173.03 505.10 173.80 C503.13 174.57 503.58 174.72 503.80 175.70 C504.02 176.68 505.08 178.37 506.40 179.70 C507.72 181.03 511.70 182.72 511.70 183.70 C511.70 184.68 509.27 184.83 506.40 185.60 C503.53 186.37 496.92 187.63 494.50 188.30 C492.08 188.97 492.00 188.95 491.90 189.60 C491.80 190.25 494.23 191.32 493.90 192.20 C493.57 193.08 490.50 194.02 489.90 194.90 C489.30 195.78 490.10 196.43 490.30 197.50 C490.50 198.57 490.42 199.78 491.10 201.30 C491.78 202.82 494.00 205.28 494.40 206.60 C494.80 207.92 493.05 207.88 493.50 209.20 C493.95 210.52 496.18 212.63 497.10 214.50 C498.02 216.37 499.12 218.82 499.00 220.40 C498.88 221.98 495.62 222.78 496.40 224.00 C497.18 225.22 503.15 226.32 503.70 227.70 C504.25 229.08 499.93 230.77 499.70 232.30 C499.47 233.83 502.15 235.47 502.30 236.90 C502.45 238.33 500.15 239.62 500.60 240.90 C501.05 242.18 504.12 243.32 505.00 244.60 C505.88 245.88 506.12 247.50 505.90 248.60 C505.68 249.70 504.95 250.32 503.70 251.20 C502.45 252.08 499.83 252.90 498.40 253.90 C496.97 254.90 496.32 256.43 495.10 257.20 C493.88 257.97 491.65 257.85 491.10 258.50 C490.55 259.15 490.70 260.12 491.80 261.10 C492.90 262.08 496.27 263.40 497.70 264.40 C499.13 265.40 499.85 266.10 500.40 267.10 C500.95 268.10 500.13 269.20 501.00 270.40 C501.87 271.60 505.32 273.10 505.60 274.30 C505.88 275.50 502.87 276.50 502.70 277.60 C502.53 278.70 504.67 279.80 504.60 280.90 C504.53 282.00 502.08 282.98 502.30 284.20 C502.52 285.42 505.52 286.90 505.90 288.20 C506.28 289.50 503.87 290.67 504.60 292.00 C505.33 293.33 511.05 294.78 510.30 296.20 C509.55 297.62 501.87 299.62 500.10 300.50 C498.33 301.38 498.55 300.95 499.70 301.50 C500.85 302.05 505.97 302.87 507.00 303.80 C508.03 304.73 505.95 306.10 505.90 307.10 C505.85 308.10 507.07 308.92 506.70 309.80 C506.33 310.68 504.43 311.42 503.70 312.40 C502.97 313.38 503.08 314.60 502.30 315.70 C501.52 316.80 500.20 318.00 499.00 319.00 C497.80 320.00 494.65 320.48 495.10 321.70 C495.55 322.92 499.83 324.77 501.70 326.30 C503.57 327.83 505.03 329.53 506.30 330.90 C507.57 332.27 509.05 333.22 509.30 334.50 C509.55 335.78 508.05 337.25 507.80 338.60 C507.55 339.95 507.25 341.72 507.80 342.60 C508.35 343.48 508.78 343.32 511.10 343.90 C513.42 344.48 521.25 345.43 521.70 346.10 C522.15 346.77 516.22 347.17 513.80 347.90 C511.38 348.63 507.32 349.63 507.20 350.50 C507.08 351.37 509.58 352.12 513.10 353.10 C516.62 354.08 523.47 355.40 528.30 356.40 C533.13 357.40 541.45 358.32 542.10 359.10 C542.75 359.88 535.27 360.45 532.20 361.10 C529.13 361.75 524.80 362.23 523.70 363.00 C522.60 363.77 523.95 364.82 525.60 365.70 C527.25 366.58 531.83 367.42 533.60 368.30 C535.37 369.18 535.33 370.00 536.20 371.00 C537.07 372.00 538.58 372.98 538.80 374.30 C539.02 375.62 537.72 377.07 537.50 378.90 C537.28 380.73 537.17 383.35 537.50 385.30 C537.83 387.25 539.38 389.07 539.50 390.60 C539.62 392.13 538.75 393.30 538.20 394.50 C537.65 395.70 536.13 396.48 536.20 397.80 C536.27 399.12 539.03 401.18 538.60 402.40 C538.17 403.62 534.67 404.22 533.60 405.10 C532.53 405.98 533.20 406.60 532.20 407.70 C531.20 408.80 528.03 410.60 527.60 411.70 C527.17 412.80 528.28 413.42 529.60 414.30 C530.92 415.18 534.67 416.12 535.50 417.00 C536.33 417.88 534.75 419.17 534.60 419.60" fill="none" stroke="#C40000" stroke-width="1.05" stroke-linejoin="round"/>
<rect x="466.50" y="105.80" width="98.10" height="314.00" fill="none" stroke="#008080" stroke-width="1.4"/>
<text x="509.8" y="102.0" style="font-size:5.8px" fill="#D81010" textLength="11.3" lengthAdjust="spacingAndGlyphs">GRD</text>
<text x="507.8" y="427.0" style="font-size:5.8px" fill="#D01010" textLength="15.9" lengthAdjust="spacingAndGlyphs">(0-150)</text>
</svg>
</body></html>
